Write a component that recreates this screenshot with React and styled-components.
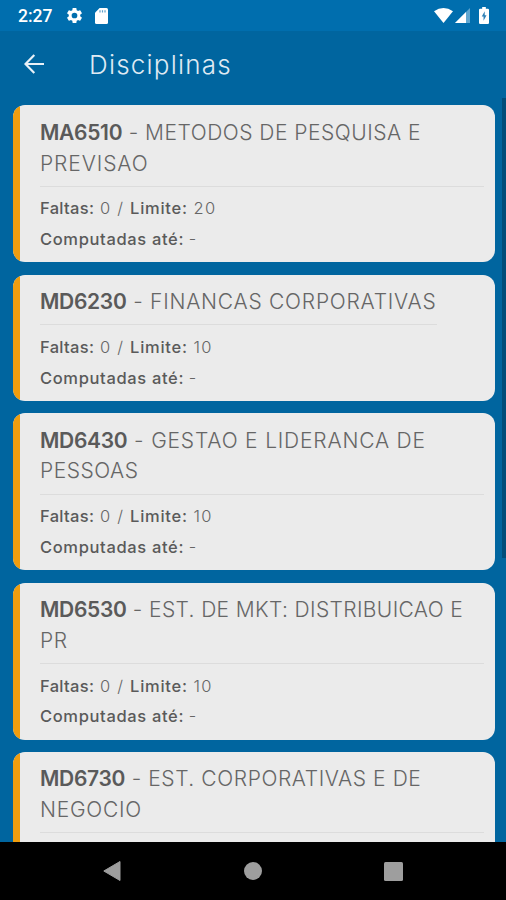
import React from "react";
import styled, { createGlobalStyle } from "styled-components";

const GlobalStyle = createGlobalStyle`
  * {
    box-sizing: border-box;
  }

  body {
    margin: 0;
    background: #000;
    font-family: Inter, "Open Sans", sans-serif;
  }
`;

const Screen = styled.div`
  display: flex;
  flex-direction: column;
  width: 506px;
  height: 900px;
  overflow: hidden;
  background: #00659f;
`;

const StatusBar = styled.div`
  display: flex;
  flex: none;
  align-items: center;
  justify-content: space-between;
  height: 31px;
  padding: 0 17px 0 18px;
  background: #006eae;
`;

const StatusGroup = styled.div`
  display: flex;
  align-items: center;
  height: 31px;
`;

const Clock = styled.span`
  width: 47px;
  color: #fff;
  font-family: Roboto, sans-serif;
  font-size: 17.5px;
  font-weight: 500;
  line-height: 32px;
`;

const Icon = styled.svg`
  display: block;
  flex: none;
  margin-left: ${props => props.$gap || 0}px;
`;

const Header = styled.header`
  display: flex;
  flex: none;
  align-items: center;
  height: 67px;
  padding: 0 0 1px 24px;
`;

const BackButton = styled.button`
  width: 65px;
  padding: 0;
  border: 0;
  background: none;
`;

const Heading = styled.h1`
  margin: 2px 0 0;
  color: #dfeaf3;
  font-size: 26px;
  font-weight: 300;
  letter-spacing: 1.2px;
  line-height: 36px;
`;

const Content = styled.main`
  display: flex;
  flex: 1;
  min-height: 0;
  justify-content: space-between;
  overflow: hidden;
`;

const List = styled.div`
  display: flex;
  flex-direction: column;
  gap: 12.3px;
  width: 482px;
  margin: 7.4px 0 0 13px;
`;

const Scrollbar = styled.div`
  width: 4px;
  height: 460px;
  background: #004d7a;
`;

const Card = styled.section`
  display: flex;
  flex: none;
  min-height: 126px;
  overflow: hidden;
  border-radius: 12px;
  background: #ebebeb;
  color: #666;
`;

const Stripe = styled.div`
  flex: none;
  width: 7px;
  background: #ef9d0f;
`;

const CardBody = styled.div`
  flex: 1;
  padding: 12.4px 11px 7.9px 20px;
`;

const Title = styled.h2`
  width: ${props => (props.$fit ? "fit-content" : "auto")};
  margin: 0 0 6.7px;
  padding-bottom: 6.3px;
  border-bottom: 1px solid #dcdcdc;
  font-size: 21px;
  font-weight: 300;
  line-height: 30.8px;
`;

const Line = styled.span`
  display: block;
  letter-spacing: ${props => props.$tracking}px;
  white-space: pre;
`;

const Code = styled.strong`
  color: #5a5a5a;
  font-weight: 600;
  letter-spacing: -0.3px;
`;

const Detail = styled.p`
  margin: 0;
  font-size: 16.5px;
  font-weight: 300;
  line-height: 30.6px;
  white-space: pre;
`;

const Label = styled.strong`
  color: #5a5a5a;
  font-weight: 500;
  letter-spacing: ${props => props.$tracking || 0.3}px;
`;

const Value = styled.span`
  letter-spacing: 1.2px;
`;

const NavBar = styled.nav`
  display: flex;
  flex: none;
  align-items: center;
  justify-content: space-between;
  height: 58px;
  padding: 0 103px;
  background: #000;
`;

const subjects = [
  {
    code: "MA6510",
    lines: [["METODOS DE PESQUISA E", 0.5], ["PREVISAO", 0.9]],
    limit: 20
  },
  {
    code: "MD6230",
    lines: [["FINANCAS CORPORATIVAS", 0.76]],
    limit: 10
  },
  {
    code: "MD6430",
    lines: [["GESTAO E LIDERANCA DE", 0.81], ["PESSOAS", 0.5]],
    limit: 10
  },
  {
    code: "MD6530",
    lines: [["EST. DE MKT: DISTRIBUICAO E", 0.37], ["PR", 0.5]],
    limit: 10
  },
  {
    code: "MD6730",
    lines: [["EST. CORPORATIVAS E DE", 0.58], ["NEGOCIO", 0.75]]
  }
];

const SubjectCard = ({ code, lines, limit }) => (
  <Card>
    <Stripe />
    <CardBody>
      <Title $fit={lines.length === 1}>
        {lines.map(([text, tracking], index) => (
          <Line key={text} $tracking={tracking}>
            {index === 0 && <Code>{code}</Code>}
            {index === 0 && " - "}
            {text}
          </Line>
        ))}
      </Title>
      {limit && (
        <>
          <Detail>
            <Label>Faltas:</Label>
            <Value> 0 / </Value>
            <Label $tracking={0.75}>Limite:</Label>
            <Value> {limit}</Value>
          </Detail>
          <Detail>
            <Label $tracking={0.65}>Computadas até:</Label> -
          </Detail>
        </>
      )}
    </CardBody>
  </Card>
);

const App = () => (
  <Screen>
    <GlobalStyle />
    <StatusBar>
      <StatusGroup>
        <Clock>2:27</Clock>
        <Icon width="19" height="19" viewBox="0 0 24 24" fill="#fff">
          <path d="M19.14 12.94c.04-.3.06-.61.06-.94 0-.32-.02-.64-.07-.94l2.03-1.58a.49.49 0 0 0 .12-.61l-1.92-3.32a.49.49 0 0 0-.59-.22l-2.39.96c-.5-.38-1.03-.7-1.62-.94l-.36-2.54a.48.48 0 0 0-.48-.41h-3.84c-.24 0-.43.17-.47.41l-.36 2.54c-.59.24-1.13.57-1.62.94l-2.39-.96a.49.49 0 0 0-.59.22L2.74 8.87c-.12.21-.08.47.12.61l2.03 1.58c-.05.3-.09.63-.09.94s.02.64.07.94l-2.03 1.58a.49.49 0 0 0-.12.61l1.92 3.32c.12.22.37.29.59.22l2.39-.96c.5.38 1.03.7 1.62.94l.36 2.54c.05.24.24.41.48.41h3.84c.24 0 .44-.17.47-.41l.36-2.54c.59-.24 1.13-.56 1.62-.94l2.39.96c.22.08.47 0 .59-.22l1.92-3.32a.49.49 0 0 0-.12-.61l-2.01-1.58zM12 15.6a3.6 3.6 0 1 1 0-7.2 3.6 3.6 0 0 1 0 7.2z" />
        </Icon>
        <Icon $gap={11} width="13" height="16" viewBox="0 0 13 16">
          <path d="M4.6 0H11.5Q13 0 13 1.5V14.5Q13 16 11.5 16H1.5Q0 16 0 14.5V4.8Z" fill="#fff" />
          <path d="M5 2.2V4.6M7.5 2.2V4.6M10 2.2V4.6" stroke="#5c9fca" strokeWidth="1.2" />
        </Icon>
      </StatusGroup>
      <StatusGroup>
        <Icon width="19" height="15" viewBox="0 0 20 15" preserveAspectRatio="none">
          <path d="M0 3.2Q10-3 20 3.2L10 15Z" fill="#fff" />
        </Icon>
        <Icon $gap={2} width="15" height="15" viewBox="0 0 15 15">
          <path d="M15 0V15H0Z" fill="#5fa6d0" />
          <path d="M11 4V15H0Z" fill="#fff" />
        </Icon>
        <Icon $gap={9} width="10" height="17" viewBox="0 0 11 17" preserveAspectRatio="none">
          <path d="M3.5 0H7.5V1.7H9.8Q11 1.7 11 3V15.8Q11 17 9.8 17H1.2Q0 17 0 15.8V3Q0 1.7 1.2 1.7H3.5Z" fill="#fff" />
          <path d="M6.3 4.2L3 9.6H5V13.8L8.3 8.2H6.3Z" fill="#2f80b6" />
        </Icon>
      </StatusGroup>
    </StatusBar>
    <Header>
      <BackButton aria-label="Voltar">
        <Icon width="20" height="20" viewBox="0 0 20 20" fill="none" stroke="#e8f1f8" strokeWidth="2.2">
          <path d="M20 10H1.5M10.3 1L1.5 10L10.3 19" />
        </Icon>
      </BackButton>
      <Heading>Disciplinas</Heading>
    </Header>
    <Content>
      <List>
        {subjects.map(subject => (
          <SubjectCard key={subject.code} {...subject} />
        ))}
      </List>
      <Scrollbar />
    </Content>
    <NavBar>
      <Icon width="18" height="20" viewBox="0 0 18 20">
        <path d="M17 0.5V19.5L0.8 10Z" fill="#9e9e9e" stroke="#9e9e9e" strokeLinejoin="round" />
      </Icon>
      <Icon width="18" height="18" viewBox="0 0 18 18">
        <circle cx="9" cy="9" r="9" fill="#9e9e9e" />
      </Icon>
      <Icon width="19" height="19" viewBox="0 0 19 19">
        <rect width="19" height="19" rx="1.5" fill="#9e9e9e" />
      </Icon>
    </NavBar>
  </Screen>
);

export default App;
